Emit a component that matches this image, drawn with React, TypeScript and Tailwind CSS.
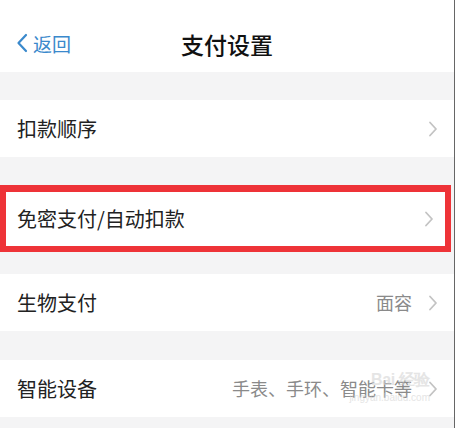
const font = { fontFamily: '"Noto Sans CJK SC", "Noto Sans", sans-serif' }

function Chevron() {
  return (
    <svg width="10" height="16" viewBox="0 0 10 16" className="shrink-0">
      <path d="M2 1.5 L8 8 L2 14.5" fill="none" stroke="#c3c3c3" strokeWidth="1.8" strokeLinecap="round" strokeLinejoin="round" />
    </svg>
  )
}

function Row({ label, value }: { label: string; value?: string }) {
  return (
    <div className="flex h-[57px] items-center bg-white pl-[17px] pr-[16px]">
      <span className="flex-1 text-[20px] text-[#222]">{label}</span>
      {value && <span className="mr-[16px] text-[18px] text-[#8a8a8a]">{value}</span>}
      <Chevron />
    </div>
  )
}

export default function App() {
  return (
    <div className="flex h-[428px] w-[456px] overflow-hidden bg-white" style={font}>
      <div className="relative flex w-[455px] flex-col bg-[#f4f4f5] border-r border-[#666]">
        <div className="relative flex h-[72px] items-center justify-center bg-white">
          <div className="absolute left-[16px] top-[33px] flex items-center gap-[5px] text-[#3a89cc]">
            <svg width="12" height="20" viewBox="0 0 12 20">
              <path d="M10 2 L2.5 10 L10 18" fill="none" stroke="#3a89cc" strokeWidth="2.2" strokeLinecap="round" strokeLinejoin="round" />
            </svg>
            <span className="text-[19px] leading-none">返回</span>
          </div>
          <span className="pt-[17px] text-[23px] font-medium text-[#111]">支付设置</span>
        </div>

        <div className="mt-[28px]">
          <Row label="扣款顺序" />
        </div>

        <div className="mt-[28px] w-[451px] border-[6px] border-t-[7px] border-[#ee3338] bg-white">
          <div className="flex h-[54px] items-center pl-[11px] pr-[11px]">
            <span className="flex-1 text-[20px] text-[#222]">免密支付/自动扣款</span>
            <Chevron />
          </div>
        </div>

        <div className="mt-[22px]">
          <Row label="生物支付" value="面容" />
        </div>

        <div className="relative mt-[29px]">
          <Row label="智能设备" value="手表、手环、智能卡等" />
          <div className="pointer-events-none absolute right-[24px] top-[12px] flex flex-col items-end text-[#d4d4d4] opacity-60">
            <span className="text-[16px] font-bold leading-none tracking-tight" style={{ fontFamily: '"Liberation Sans", sans-serif' }}>Bai 经验</span>
            <span className="mt-[5px] text-[10px] leading-none" style={{ fontFamily: '"Liberation Sans", sans-serif' }}>jingyan.baidu.com</span>
          </div>
        </div>
      </div>
    </div>
  )
}
